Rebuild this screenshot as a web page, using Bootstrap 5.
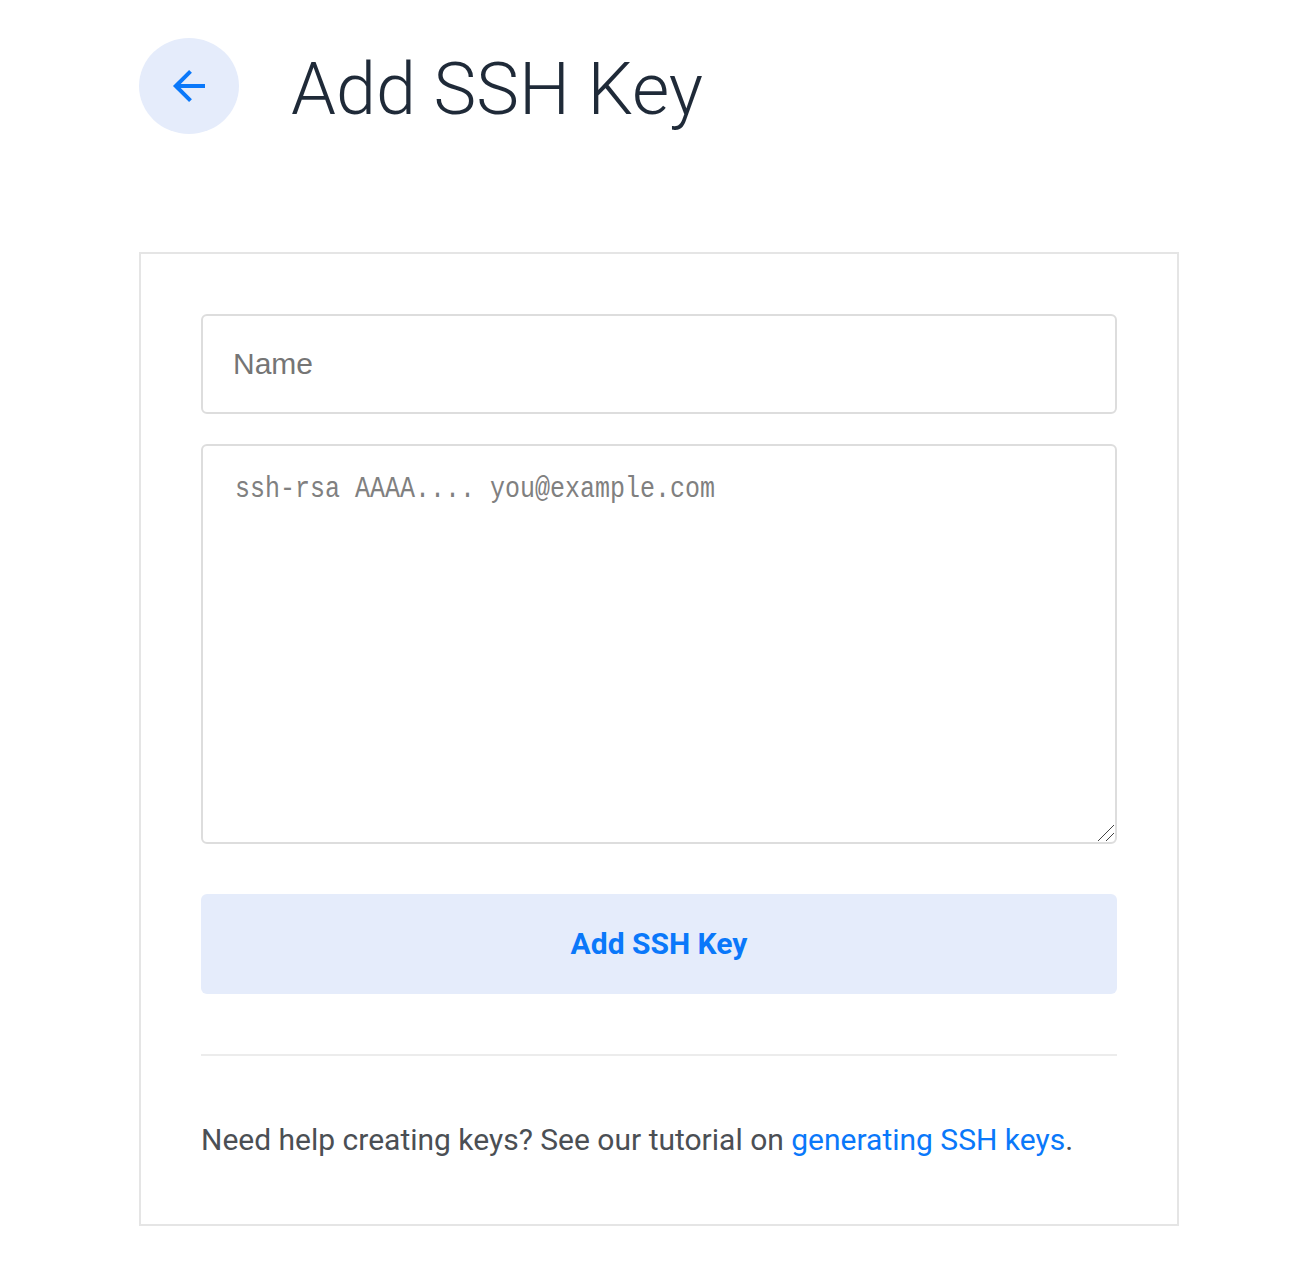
<!DOCTYPE html>
<html lang="en">
<head>
<meta charset="utf-8">
<meta name="viewport" content="width=device-width, initial-scale=1">
<title>Add SSH Key</title>
<link href="https://cdn.jsdelivr.net/npm/bootstrap@5.3.0/dist/css/bootstrap.min.css" rel="stylesheet">
<style>
body { font-family: Roboto, "Liberation Sans", sans-serif; color: #4b4f54; background: #fff; overflow-x: hidden; }
.page-wrap { width: 1040px; margin-left: 139px; padding-top: 38px; }
.page-head { height: 96px; margin-bottom: 118px; }
.back-btn { width: 100px; height: 96px; background: #e5ecfb; margin-right: 52px; }
.page-title { font-size: 72px; line-height: 96px; font-weight: 300; color: #1f2a38; padding-top: 7px; }
.key-panel { border: 2px solid #e5e5e5; border-radius: 0; padding: 60px; height: 974px; --bs-card-bg: #fff; }
.key-panel > * { flex-shrink: 0; }
.key-field { border: 2px solid #ddd; border-radius: 6px; padding: 0 30px; font-size: 30px; color: #4b4f54; }
.key-name { height: 100px; font-family: "Liberation Sans", sans-serif; }
.key-name::placeholder { color: #757575; opacity: 1; }
.key-block { margin: 30px 0 50px; }
.key-text { height: 400px; resize: none; }
.key-hint { top: 25px; left: 34px; font: 30px/40px "Liberation Mono", monospace; color: #808080; transform: scaleX(.8333); transform-origin: 0 0; pointer-events: none; white-space: nowrap; }
.key-grip { right: 2px; bottom: 2px; width: 18px; height: 18px; pointer-events: none; }
.key-submit { height: 100px; border: 0; border-radius: 6px; background: #e5ecfb; color: #0a78fa; font-size: 30px; font-weight: 700; padding: 0 0 2px; }
.key-rule { height: 2px; background: #ececec; margin: 60px 0 59px; }
.key-help { font-size: 30px; line-height: 50px; white-space: nowrap; }
.key-help a { color: #0a78fa; }
</style>
<script src="https://cdn.jsdelivr.net/npm/bootstrap@5.3.0/dist/js/bootstrap.bundle.min.js"></script>
</head>
<body>
<main class="page-wrap">
  <header class="page-head d-flex align-items-center">
    <a href="#" class="back-btn rounded-circle d-flex align-items-center justify-content-center flex-shrink-0" aria-label="Back">
      <svg width="34" height="34" viewBox="0 0 34 34" fill="none" stroke="#0a78fa" stroke-width="4"><path d="M33 17H4M18.5 2.3 3.8 17l14.7 14.7"/></svg>
    </a>
    <h1 class="page-title mb-0">Add SSH Key</h1>
  </header>
  <form class="card key-panel">
    <input type="text" class="form-control key-field key-name" placeholder="Name" aria-label="Name">
    <div class="key-block position-relative">
      <textarea id="publicKey" class="form-control key-field key-text"></textarea>
      <label for="publicKey" class="key-hint position-absolute">ssh-rsa AAAA.... you@example.com</label>
      <svg class="key-grip position-absolute" viewBox="0 0 18 18" fill="none" stroke="#444" stroke-width="1"><path d="M1 17 17 1M9 17l8-8"/></svg>
    </div>
    <button type="button" class="btn key-submit w-100">Add SSH Key</button>
    <div class="key-rule"></div>
    <p class="key-help mb-0">Need help creating keys? See our tutorial on <a href="#" class="text-decoration-none">generating SSH keys</a>.</p>
  </form>
</main>
</body>
</html>
